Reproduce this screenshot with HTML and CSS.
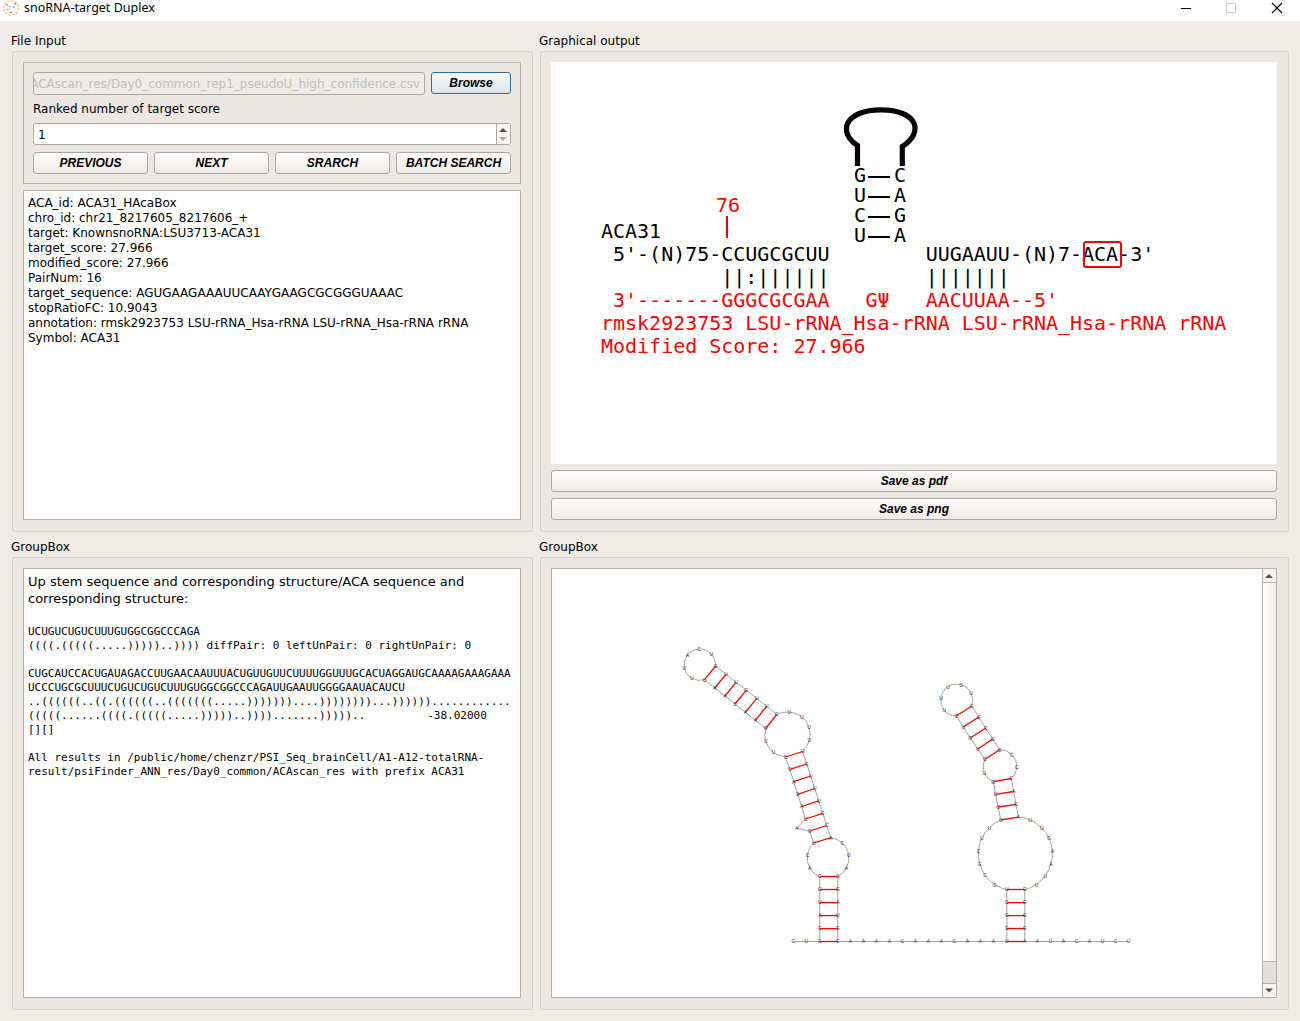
FILE: index.html
```html
<!DOCTYPE html>
<html lang="en">
<head>
<meta charset="utf-8">
<title>snoRNA-target Duplex</title>
<link rel="stylesheet" href="styles.css">
</head>
<body>
<header class="titlebar">
  <svg class="app-icon" width="16" height="16" viewBox="0 0 16 16">
    <circle cx="8" cy="8" r="7.3" fill="none" stroke="#f5bd74" stroke-width="1.1" stroke-dasharray="2.6 1.2"/>
    <path d="M4 5l3 2.500M10 7l3-3M8 9v4M4.500 9.500l2-1" fill="none" stroke="#bbb" stroke-width=".8"/>
    <path d="M3 4.500h1.500M11.500 3.500h1.500M7 12.500h1.500M10 7h1.500M4 9.500h1M6.500 6.500h1" stroke="#777" stroke-width="1"/>
  </svg>
  <h1 class="title">snoRNA-target Duplex</h1>
  <svg class="controls" width="104" height="16" viewBox="0 0 104 16" fill="none" shape-rendering="crispEdges">
    <path d="M1 8.500h10" stroke="#000"/>
    <rect x="46.500" y="3.500" width="9" height="9" stroke="#ccc"/>
    <path d="M92 3l10 10M102 3l-10 10" stroke="#000" shape-rendering="auto" stroke-width="1.2"/>
  </svg>
</header>
<main class="grid">
  <section class="group">
    <h2 class="group-title">File Input</h2>
    <div class="frame">
      <form class="inputs">
        <div class="row">
          <div class="path"><span>ACAscan_res/Day0_common_rep1_pseudoU_high_confidence.csv</span></div>
          <button type="button" class="btn browse">Browse</button>
        </div>
        <label class="rank">Ranked number of target score</label>
        <div class="spin">
          <span class="value">1</span>
          <svg class="arrows" width="13" height="20" viewBox="0 0 13 20">
            <path d="M2 8L6 4l4 4z" fill="#555"/><path d="M2 13l4 4 4-4z" fill="#aaa"/>
          </svg>
        </div>
        <div class="row buttons">
          <button type="button" class="btn">PREVIOUS</button>
          <button type="button" class="btn">NEXT</button>
          <button type="button" class="btn">SRARCH</button>
          <button type="button" class="btn">BATCH SEARCH</button>
        </div>
      </form>
      <div class="textbox details">ACA_id: ACA31_HAcaBox
chro_id: chr21_8217605_8217606_+
target: KnownsnoRNA:LSU3713-ACA31
target_score: 27.966
modified_score: 27.966
PairNum: 16
target_sequence: AGUGAAGAAAUUCAAYGAAGCGCGGGUAAAC
stopRatioFC: 10.9043
annotation: rmsk2923753 LSU-rRNA_Hsa-rRNA LSU-rRNA_Hsa-rRNA rRNA
Symbol: ACA31</div>
    </div>
  </section>
  <section class="group">
    <h2 class="group-title">Graphical output</h2>
    <div class="frame">
      <svg class="duplex" width="726" height="402" viewBox="551 62 726 402">
        <path d="M857.500 166V145.500C837 132 845 109.800 881 109.800S925 132 902.300 146.500V166" fill="none" stroke="#0a0404" stroke-width="5.200"/>
        <path d="M868 177h22M868 197h22M868 217h22M868 237h22" stroke="#000" stroke-width="2"/>
        <text x="854" y="182">G</text><text x="894" y="182">C</text>
        <text x="854" y="202">U</text><text x="894" y="202">A</text>
        <text x="854" y="222">C</text><text x="894" y="222">G</text>
        <text x="854" y="242">U</text><text x="894" y="242">A</text>
        <text class="red" x="716" y="212">76</text>
        <path d="M727 216v22" stroke="#f00" stroke-width="2"/>
        <text x="601" y="238">ACA31</text>
        <text x="601" y="261"> 5'-(N)75-CCUGCGCUU        UUGAAUU-(N)7-ACA-3'</text>
        <text x="601" y="284">          ||:||||||        |||||||</text>
        <text class="red" x="601" y="307"> 3'-------GGGCGCGAA   GΨ   AACUUAA--5'</text>
        <text class="red" x="601" y="330">rmsk2923753 LSU-rRNA_Hsa-rRNA LSU-rRNA_Hsa-rRNA rRNA</text>
        <text class="red" x="601" y="353">Modified Score: 27.966</text>
        <rect x="1084" y="242" width="37" height="25" rx="2" fill="none" stroke="#f00" stroke-width="2"/>
      </svg>
      <button type="button" class="btn">Save as pdf</button>
      <button type="button" class="btn">Save as png</button>
    </div>
  </section>
  <section class="group">
    <h2 class="group-title">GroupBox</h2>
    <div class="frame">
      <div class="textbox results">
        <p class="lead">Up stem sequence and corresponding structure/ACA sequence and corresponding structure:</p>
<pre class="mono">UCUGUCUGUCUUUGUGGCGGCCCAGA
((((.(((((.....)))))..)))) diffPair: 0 leftUnPair: 0 rightUnPair: 0

CUGCAUCCACUGAUAGACCUUGAACAAUUUACUGUUGUUCUUUUGGUUUGCACUAGGAUGCAAAAGAAAGAAA
UCCCUGCGCUUUCUGUCUGUCUUUGUGGCGGCCCAGAUUGAAUUGGGGAAUACAUCU
..((((((..((.((((((..(((((((.....)))))))....))))))))...))))))............
(((((......((((.(((((.....)))))..)))).......)))))..<span class="energy">-38.02000</span>
[][]

All results in /public/home/chenzr/PSI_Seq_brainCell/A1-A12-totalRNA-
result/psiFinder_ANN_res/Day0_common/ACAscan_res with prefix ACA31</pre>
      </div>
    </div>
  </section>
  <section class="group">
    <h2 class="group-title">GroupBox</h2>
    <div class="frame">
      <div class="textbox viewer">
        <svg id="fold" class="fold" width="710" height="427" viewBox="552 569 710 427"></svg>
        <div class="scrollbar">
          <svg class="cap" width="13" height="13"><path d="M2 9l4-4 4 4z" fill="#555"/></svg>
          <div class="thumb"></div>
          <div class="track"></div>
          <svg class="cap" width="13" height="13"><path d="M2 4.500l4 4 4-4z" fill="#555"/></svg>
        </div>
      </div>
    </div>
  </section>
</main>
<script src="fold.js"></script>
</body>
</html>
```
FILE: styles.css
```css
* { box-sizing: border-box; }
body {
  margin: 0;
  width: 1300px;
  height: 1021px;
  overflow: hidden;
  background: #efebe7;
  color: #000;
  font: 12px/15px "DejaVu Sans", sans-serif;
}
h1, h2, p, pre { margin: 0; font-weight: normal; }
svg { display: block; flex: none; }
.titlebar {
  display: flex;
  align-items: center;
  height: 21px;
  padding: 0 16px 5px 3px;
  background: #fff;
}
.title { margin-left: 5px; font: 12.5px/16px "Noto Sans", sans-serif; }
.controls { margin-left: auto; }
.grid {
  display: grid;
  grid-template-columns: 521px 749px;
  grid-template-rows: 499px 471px;
  column-gap: 7px;
  row-gap: 7px;
  padding: 12px 11px 0 12px;
}
.group { display: flex; flex-direction: column; }
.group-title {
  height: 18px;
  margin-left: -1px;
  padding-top: 1px;
  font-size: 12px;
  line-height: 15px;
}
.frame {
  display: flex;
  flex: 1;
  flex-direction: column;
  gap: 6px;
  min-height: 0;
  padding: 10px 11px 11px 10px;
  border: 1px solid #d5d1cd;
  border-radius: 2px;
  background: #ebe7e3;
}
.inputs {
  display: flex;
  flex-direction: column;
  height: 122px;
  padding: 9px;
  border: 1px solid #b4b0ac;
}
.row { display: flex; gap: 6px; }
.btn {
  height: 22px;
  padding: 0;
  border: 1px solid #aba7a3;
  border-radius: 3px;
  background: linear-gradient(#fefefe, #edebe9);
  color: #000;
  font: italic bold 12px/18px "Liberation Sans", sans-serif;
  flex: none;
}
.browse {
  width: 80px;
  border-color: #2d6e9e;
  background: linear-gradient(#fafbfb, #dce3e6);
}
.path {
  display: flex;
  justify-content: flex-end;
  width: 392px;
  height: 23px;
  padding: 4px 4px 0 0;
  overflow: hidden;
  border: 1px solid #aba7a3;
  border-radius: 3px;
  background: #efebe7;
  color: #bebebe;
  white-space: nowrap;
}
.rank { height: 28px; padding-top: 7px; }
.spin {
  display: flex;
  justify-content: space-between;
  height: 22px;
  border: 1px solid #aba7a3;
  border-radius: 3px;
  background: #fff;
}
.value { padding: 4px 4px 0; }
.arrows {
  box-sizing: content-box;
  border-left: 1px solid #aba7a3;
  background: #f7f6f5;
  border-radius: 0 2px 2px 0;
}
.buttons { margin-top: 7px; }
.buttons .btn { width: 115px; }
.textbox {
  flex: 1;
  min-height: 0;
  border: 1px solid #b4b0ac;
  background: #fff;
}
.details { padding: 5px 4px; white-space: pre; }
.duplex { background: #fff; }
.duplex text {
  font: 20px "DejaVu Sans Mono", monospace;
  letter-spacing: -.015px;
  white-space: pre;
}
.duplex .red { fill: #f00; }
.results { padding: 4px; }
.lead { font-size: 13px; line-height: 17px; }
.mono {
  margin-top: 18px;
  font: 11px/14px "DejaVu Sans Mono", monospace;
  letter-spacing: -.01px;
}
.energy { margin-left: 62px; }
.viewer { display: flex; }
.scrollbar {
  display: flex;
  flex-direction: column;
  width: 14px;
  border-left: 1px solid #b4b0ac;
  background: #f6f4f2;
}
.thumb {
  flex: 1;
  border: solid #b4b0ac;
  border-width: 1px 0;
  background: linear-gradient(90deg, #fff, #f0eeec);
}
.track { height: 22px; border-bottom: 1px solid #b4b0ac; background: #e2e0dc; }
.fold path { fill: none; stroke: #999; stroke-width: .9; }
.fold .pair { stroke: #f00; stroke-width: 1.3; }
.fold text {
  fill: #333;
  font: 5px "Liberation Sans", sans-serif;
  text-anchor: middle;
}
```
FILE: fold.js
```js
// Draws the folded RNA: backbone, base pairs and one letter per base.
const sequence =
  "CUGCAUCCACUGAUAGACCUUGAACAAUUUACUGUUGUUCUUUUGGUUUGCACUAGGAUGCAAAAGAAAGAAA" +
  "UCCCUGCGCUUUCUGUCUGUCUUUGUGGCGGCCCAGAUUGAAUUGGGGAAUACAUCU";

const base = 941.5;
const points = [
  [793.3, base], [806.3, base],
  [819.8, base], [819.8, 928.6], [819.8, 915.6], [819.8, 902.6], [819.8, 889.5], [819.8, 876.5],
  [809.7, 868], [807.5, 855], [813.7, 843], [809.7, 831], [796.7, 828.3],
  [805.5, 819], [801.7, 806.5], [797.7, 794.3], [793.7, 781.7], [789.7, 769.3], [785.5, 757],
  [773.3, 752.3], [765.7, 741.3],
  [765.7, 728.5], [755.3, 720.3], [745.3, 712.3], [735, 704], [725, 696], [714.7, 688], [704.4, 679.8],
  [691.7, 678], [684.3, 667.7], [687.3, 655.3], [699, 649], [711.3, 654],
  [715.7, 666], [726, 674.3], [736, 682.3], [746.3, 690.2], [756.7, 698.3], [766.7, 706.3], [776.7, 714.5],
  [789.3, 712], [801.7, 716.7], [809, 727], [809.3, 740.3],
  [802.7, 751.5], [806.7, 764], [810.7, 776], [814.7, 788.5], [818.7, 800.8], [822.7, 813.3], [826.7, 825.5], [830.8, 837.7],
  [842.3, 843], [848.7, 855], [846.3, 868],
  [837.8, 876.5], [837.8, 889.5], [837.8, 902.6], [837.8, 915.6], [837.8, 928.6], [837.8, base]
];
for (let i = 0; i < 12; i++) points.push([850.3 + 13 * i, base]);
points.push(
  [1006.8, base], [1006.8, 928.5], [1006.8, 915.6], [1006.8, 902.6], [1006.8, 889.5],
  [994.7, 884.7], [985, 875.3], [979.7, 863.7], [978.5, 851], [981.7, 838.3], [989.3, 827.7],
  [1000.8, 820], [998, 807], [995.6, 794.4], [993.3, 781.7],
  [984.3, 772.7],
  [984.7, 759.5], [977.7, 749], [970.3, 738], [963.3, 727], [956.3, 716],
  [944.3, 710.3], [941, 698], [948, 686.7], [961.3, 684.7], [971, 693],
  [971.7, 706], [978.7, 717], [985.7, 728], [992.7, 739], [999.7, 749.7],
  [1011.7, 754.7], [1016.7, 767],
  [1011.3, 778.5], [1013.6, 791.5], [1016, 804.3], [1018.3, 817],
  [1030.3, 820], [1041.7, 827.7], [1049, 838.3], [1052.3, 851], [1051, 863.7], [1045.3, 875.7], [1036.3, 884.7],
  [1024.8, 889.5], [1024.8, 902.6], [1024.8, 915.6], [1024.8, 928.5], [1024.8, base]
);
for (let i = 0; i < 8; i++) points.push([1037.5 + 13 * i, base]);

// Loop stretches: first base, last base, radius.
const arcs = [
  [8, 11, 21], [19, 22, 23], [28, 34, 16], [40, 45, 23], [52, 56, 21],
  [78, 85, 37], [88, 90, 17], [94, 100, 16], [104, 107, 17], [110, 118, 37]
];
// Stems: first base, its partner, number of pairs.
const stems = [[3, 61, 6], [11, 52, 2], [14, 50, 6], [22, 40, 7], [74, 122, 5], [85, 110, 4], [90, 104, 5]];

const svg = document.getElementById("fold");
function add(name, attributes, text) {
  const node = document.createElementNS("http://www.w3.org/2000/svg", name);
  for (const key in attributes) node.setAttribute(key, attributes[key]);
  if (text) node.textContent = text;
  svg.appendChild(node);
}

let d = "M" + points[0];
for (let i = 2; i <= points.length; i++) {
  const arc = arcs.find(([from, to]) => i > from && i <= to);
  d += (arc ? `A${arc[2]} ${arc[2]} 0 0 1 ` : "L") + points[i - 1];
}
add("path", { d });
for (const [from, to, count] of stems) {
  for (let k = 0; k < count; k++) {
    add("path", { class: "pair", d: `M${points[from + k - 1]}L${points[to - k - 1]}` });
  }
}
points.forEach(([x, y], i) => add("text", { x, y: y + 1.8 }, sequence[i]));
```
